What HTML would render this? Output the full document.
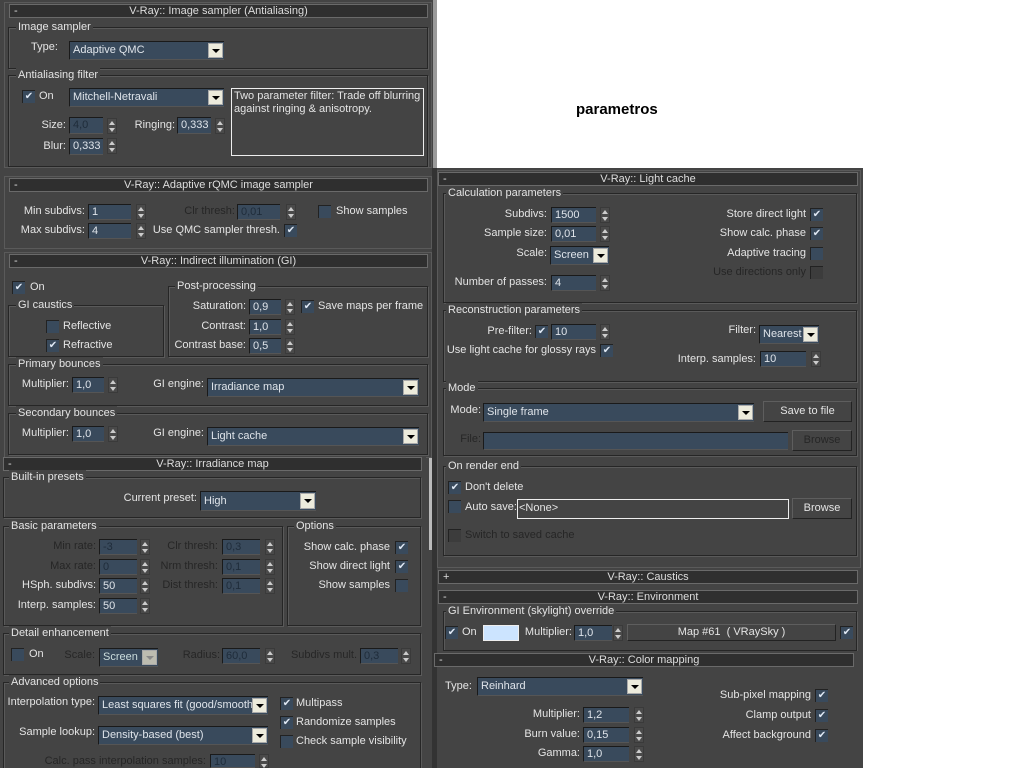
<!DOCTYPE html>
<html style="overflow:hidden;width:1024px;height:768px"><head><meta charset="utf-8"><style>
body{margin:0;width:1024px;height:768px;background:#fff;position:relative;overflow:hidden;font-family:"Liberation Sans",sans-serif}
div,span{position:absolute;box-sizing:border-box}
.bg{background:#444}
.t{white-space:nowrap;font-size:11px;line-height:14px;color:#e4e4e4}
.r{transform:translateX(-100%)}
.d{color:#262626}
.f{background:#394a5c;border-top:1px solid #1a1a1a;border-left:1px solid #1a1a1a;border-bottom:1px solid #555;font-size:11px;line-height:14px;color:#dfe4ea;padding-left:3px;white-space:nowrap;overflow:hidden}
.f.dm{color:#1f2c3a}
.a{right:1px;top:1px;bottom:1px;width:15px;background:#ecebdc;border:1px solid #aaa}
.a:after{content:"";position:absolute;left:3px;top:5px;border-left:4px solid transparent;border-right:4px solid transparent;border-top:4px solid #000}
.a.dm{background:#bdbcb0}.a.dm:after{border-top-color:#888}
.sp{width:10px;height:16px;background:#4a4a4a;border:1px solid #3a3a3a}
.sp:before{content:"";position:absolute;left:1px;top:2px;border-left:3px solid transparent;border-right:3px solid transparent;border-bottom:4px solid #ccc}
.sp:after{content:"";position:absolute;left:1px;top:9px;border-left:3px solid transparent;border-right:3px solid transparent;border-top:4px solid #ccc}
.cb{width:13px;height:13px;background:#394a5c;border-top:1px solid #222;border-left:1px solid #222;color:#dfe8f4;font-size:10px;line-height:12px;text-align:center}
.cb.dm{background:#3c3c3c}
.g{border:1px solid #262626;box-shadow:1px 1px 0 #5a5a5a,inset 1px 1px 0 #5a5a5a}
.gl{background:#444;padding:0 2px;font-size:11px;line-height:14px;color:#e4e4e4;white-space:nowrap}
.h{height:14px;background:#2f2f2f;border:1px solid #6a6a6a;color:#ddd;font-size:11px;line-height:12px;text-align:center;white-space:nowrap}
.h i{position:absolute;left:4px;top:0;font-style:normal}
.fr{border:1px solid #5a5a5a}
.b{border:1px solid #5e5e5e;border-right-color:#222;border-bottom-color:#222;background:#444;color:#e4e4e4;font-size:11px;line-height:18px;text-align:center}
</style></head><body>

<div class="bg" style="left:0;top:0;width:437px;height:768px"></div>
<div style="left:433px;top:0;width:4px;height:168px;background:#9a9a9a"></div>
<div style="left:429px;top:458px;width:4px;height:92px;background:#bbb"></div>
<div class="bg" style="left:432px;top:168px;width:431px;height:600px"></div>
<div style="left:432px;top:168px;width:5px;height:600px;background:#333"></div>

<div class="t" style="left:576px;top:101px;font-size:15px;line-height:18px;font-weight:bold;color:#000">parametros</div>

<!-- Panel 1 -->
<div class="fr" style="left:4px;top:2px;width:428px;height:166px"></div>
<div class="h" style="left:9px;top:4px;width:419px"><i>-</i>V-Ray:: Image sampler (Antialiasing)</div>
<div class="g" style="left:8px;top:27px;width:420px;height:42px"></div>
<div class="gl" style="left:16px;top:20px">Image sampler</div>
<div class="t" style="left:31px;top:40px">Type:</div>
<div class="f" style="left:69px;top:41px;width:155px;height:19px;line-height:17px">Adaptive QMC<span class="a"></span></div>
<div class="g" style="left:8px;top:75px;width:420px;height:92px"></div>
<div class="gl" style="left:16px;top:68px">Antialiasing filter</div>
<div class="cb" style="left:22px;top:90px">✔</div>
<div class="t" style="left:39px;top:89px">On</div>
<div class="f" style="left:69px;top:88px;width:155px;height:19px;line-height:17px">Mitchell-Netravali<span class="a"></span></div>
<div style="left:231px;top:88px;width:193px;height:68px;border:1px solid #eee;background:#444;color:#e4e4e4;font-size:11px;line-height:13px;padding:1px 2px">Two parameter filter: Trade off blurring against ringing &amp; anisotropy.</div>
<div class="t r" style="left:66px;top:118px">Size:</div>
<div class="f dm" style="left:69px;top:117px;width:34px;height:17px">4,0</div>
<div class="sp" style="left:107px;top:118px"></div>
<div class="t r" style="left:175px;top:118px">Ringing:</div>
<div class="f" style="left:177px;top:117px;width:34px;height:17px">0,333</div>
<div class="sp" style="left:215px;top:118px"></div>
<div class="t r" style="left:66px;top:139px">Blur:</div>
<div class="f" style="left:69px;top:138px;width:34px;height:17px">0,333</div>
<div class="sp" style="left:107px;top:138px"></div>

<!-- Panel 2 -->
<div class="fr" style="left:4px;top:176px;width:428px;height:73px"></div>
<div class="h" style="left:9px;top:178px;width:419px"><i>-</i>V-Ray:: Adaptive rQMC image sampler</div>
<div class="t r" style="left:85px;top:204px">Min subdivs:</div>
<div class="f" style="left:88px;top:204px;width:43px;height:16px">1</div>
<div class="sp" style="left:136px;top:204px"></div>
<div class="t r d" style="left:235px;top:204px">Clr thresh:</div>
<div class="f dm" style="left:237px;top:204px;width:43px;height:16px">0,01</div>
<div class="sp" style="left:286px;top:204px"></div>
<div class="cb" style="left:318px;top:205px"></div>
<div class="t" style="left:336px;top:204px">Show samples</div>
<div class="t r" style="left:85px;top:223px">Max subdivs:</div>
<div class="f" style="left:88px;top:223px;width:43px;height:16px">4</div>
<div class="sp" style="left:136px;top:223px"></div>
<div class="t r" style="left:280px;top:223px">Use QMC sampler thresh.</div>
<div class="cb" style="left:284px;top:224px">✔</div>

<!-- Panel 3 GI -->
<div class="fr" style="left:4px;top:252px;width:428px;height:206px"></div>
<div class="h" style="left:9px;top:254px;width:419px"><i>-</i>V-Ray:: Indirect illumination (GI)</div>
<div class="cb" style="left:12px;top:281px">✔</div>
<div class="t" style="left:30px;top:280px">On</div>
<div class="g" style="left:8px;top:305px;width:156px;height:52px"></div>
<div class="gl" style="left:16px;top:298px">GI caustics</div>
<div class="cb" style="left:46px;top:320px"></div>
<div class="t" style="left:63px;top:319px">Reflective</div>
<div class="cb" style="left:46px;top:339px">✔</div>
<div class="t" style="left:63px;top:338px">Refractive</div>
<div class="g" style="left:168px;top:286px;width:260px;height:71px"></div>
<div class="gl" style="left:175px;top:279px">Post-processing</div>
<div class="t r" style="left:246px;top:299px">Saturation:</div>
<div class="f" style="left:249px;top:299px;width:32px;height:16px">0,9</div>
<div class="sp" style="left:285px;top:299px"></div>
<div class="cb" style="left:301px;top:300px">✔</div>
<div class="t" style="left:318px;top:299px">Save maps per frame</div>
<div class="t r" style="left:246px;top:319px">Contrast:</div>
<div class="f" style="left:249px;top:319px;width:32px;height:16px">1,0</div>
<div class="sp" style="left:285px;top:319px"></div>
<div class="t r" style="left:246px;top:338px">Contrast base:</div>
<div class="f" style="left:249px;top:338px;width:32px;height:16px">0,5</div>
<div class="sp" style="left:285px;top:338px"></div>
<div class="g" style="left:8px;top:364px;width:420px;height:42px"></div>
<div class="gl" style="left:16px;top:357px">Primary bounces</div>
<div class="t r" style="left:69px;top:377px">Multiplier:</div>
<div class="f" style="left:72px;top:377px;width:32px;height:16px">1,0</div>
<div class="sp" style="left:108px;top:377px"></div>
<div class="t r" style="left:204px;top:377px">GI engine:</div>
<div class="f" style="left:207px;top:378px;width:212px;height:19px;line-height:17px">Irradiance map<span class="a"></span></div>
<div class="g" style="left:8px;top:413px;width:420px;height:42px"></div>
<div class="gl" style="left:16px;top:406px">Secondary bounces</div>
<div class="t r" style="left:69px;top:426px">Multiplier:</div>
<div class="f" style="left:72px;top:426px;width:32px;height:16px">1,0</div>
<div class="sp" style="left:108px;top:426px"></div>
<div class="t r" style="left:204px;top:426px">GI engine:</div>
<div class="f" style="left:207px;top:427px;width:212px;height:19px;line-height:17px">Light cache<span class="a"></span></div>

<!-- Panel 4 Irradiance map -->
<div class="bg" style="left:0;top:457px;width:426px;height:311px"></div>
<div class="h" style="left:3px;top:457px;width:419px"><i>-</i>V-Ray:: Irradiance map</div>
<div class="g" style="left:3px;top:477px;width:418px;height:41px"></div>
<div class="gl" style="left:9px;top:470px">Built-in presets</div>
<div class="t r" style="left:197px;top:491px">Current preset:</div>
<div class="f" style="left:200px;top:491px;width:116px;height:20px;line-height:18px">High<span class="a"></span></div>
<div class="g" style="left:3px;top:526px;width:280px;height:100px"></div>
<div class="gl" style="left:9px;top:519px">Basic parameters</div>
<div class="g" style="left:287px;top:526px;width:134px;height:100px"></div>
<div class="gl" style="left:294px;top:519px">Options</div>
<div class="t r d" style="left:96px;top:539px">Min rate:</div>
<div class="f dm" style="left:99px;top:539px;width:38px;height:16px">-3</div>
<div class="sp" style="left:140px;top:539px"></div>
<div class="t r d" style="left:218px;top:539px">Clr thresh:</div>
<div class="f dm" style="left:222px;top:539px;width:38px;height:16px">0,3</div>
<div class="sp" style="left:265px;top:539px"></div>
<div class="t r d" style="left:96px;top:559px">Max rate:</div>
<div class="f dm" style="left:99px;top:559px;width:38px;height:16px">0</div>
<div class="sp" style="left:140px;top:559px"></div>
<div class="t r d" style="left:218px;top:559px">Nrm thresh:</div>
<div class="f dm" style="left:222px;top:559px;width:38px;height:16px">0,1</div>
<div class="sp" style="left:265px;top:559px"></div>
<div class="t r" style="left:96px;top:578px">HSph. subdivs:</div>
<div class="f" style="left:99px;top:578px;width:38px;height:16px">50</div>
<div class="sp" style="left:140px;top:578px"></div>
<div class="t r d" style="left:218px;top:578px">Dist thresh:</div>
<div class="f dm" style="left:222px;top:578px;width:38px;height:16px">0,1</div>
<div class="sp" style="left:265px;top:578px"></div>
<div class="t r" style="left:96px;top:598px">Interp. samples:</div>
<div class="f" style="left:99px;top:598px;width:38px;height:16px">50</div>
<div class="sp" style="left:140px;top:598px"></div>
<div class="t r" style="left:390px;top:540px">Show calc. phase</div>
<div class="cb" style="left:395px;top:541px">✔</div>
<div class="t r" style="left:390px;top:559px">Show direct light</div>
<div class="cb" style="left:395px;top:560px">✔</div>
<div class="t r" style="left:390px;top:578px">Show samples</div>
<div class="cb" style="left:395px;top:579px"></div>
<div class="g" style="left:3px;top:633px;width:418px;height:42px"></div>
<div class="gl" style="left:9px;top:626px">Detail enhancement</div>
<div class="cb" style="left:11px;top:648px"></div>
<div class="t" style="left:29px;top:647px">On</div>
<div class="t r d" style="left:95px;top:648px">Scale:</div>
<div class="f" style="left:99px;top:648px;width:59px;height:19px;line-height:17px;color:#cdd">Screen<span class="a dm"></span></div>
<div class="t r d" style="left:220px;top:648px">Radius:</div>
<div class="f dm" style="left:222px;top:648px;width:38px;height:16px">60,0</div>
<div class="sp" style="left:265px;top:648px"></div>
<div class="t r d" style="left:357px;top:648px">Subdivs mult.</div>
<div class="f dm" style="left:360px;top:648px;width:38px;height:16px">0,3</div>
<div class="sp" style="left:401px;top:648px"></div>
<div class="g" style="left:3px;top:682px;width:418px;height:90px"></div>
<div class="gl" style="left:9px;top:675px">Advanced options</div>
<div class="t r" style="left:95px;top:695px">Interpolation type:</div>
<div class="f" style="left:98px;top:696px;width:170px;height:19px;line-height:17px">Least squares fit (good/smooth<span class="a"></span></div>
<div class="cb" style="left:280px;top:697px">✔</div>
<div class="t" style="left:296px;top:696px">Multipass</div>
<div class="cb" style="left:280px;top:716px">✔</div>
<div class="t" style="left:296px;top:715px">Randomize samples</div>
<div class="cb" style="left:280px;top:735px"></div>
<div class="t" style="left:296px;top:734px">Check sample visibility</div>
<div class="t r" style="left:95px;top:725px">Sample lookup:</div>
<div class="f" style="left:98px;top:726px;width:170px;height:19px;line-height:17px">Density-based (best)<span class="a"></span></div>
<div class="t r d" style="left:206px;top:754px">Calc. pass interpolation samples:</div>
<div class="f dm" style="left:210px;top:754px;width:45px;height:14px">10</div>
<div class="sp" style="left:259px;top:754px;height:14px"></div>

<!-- Right: Light cache -->
<div class="fr" style="left:437px;top:170px;width:424px;height:398px"></div>
<div class="h" style="left:438px;top:172px;width:420px"><i>-</i>V-Ray:: Light cache</div>
<div class="g" style="left:443px;top:193px;width:414px;height:110px"></div>
<div class="gl" style="left:446px;top:186px">Calculation parameters</div>
<div class="t r" style="left:547px;top:207px">Subdivs:</div>
<div class="f" style="left:551px;top:207px;width:45px;height:16px">1500</div>
<div class="sp" style="left:600px;top:207px"></div>
<div class="t r" style="left:547px;top:226px">Sample size:</div>
<div class="f" style="left:551px;top:226px;width:45px;height:16px">0,01</div>
<div class="sp" style="left:600px;top:226px"></div>
<div class="t r" style="left:547px;top:246px">Scale:</div>
<div class="f" style="left:550px;top:246px;width:59px;height:19px;line-height:17px">Screen<span class="a"></span></div>
<div class="t r" style="left:547px;top:275px">Number of passes:</div>
<div class="f" style="left:551px;top:275px;width:45px;height:16px">4</div>
<div class="sp" style="left:600px;top:275px"></div>
<div class="t r" style="left:806px;top:207px">Store direct light</div>
<div class="cb" style="left:810px;top:208px">✔</div>
<div class="t r" style="left:806px;top:226px">Show calc. phase</div>
<div class="cb" style="left:810px;top:227px">✔</div>
<div class="t r" style="left:806px;top:246px">Adaptive tracing</div>
<div class="cb" style="left:810px;top:247px"></div>
<div class="t r d" style="left:806px;top:265px">Use directions only</div>
<div class="cb dm" style="left:810px;top:266px"></div>
<div class="g" style="left:443px;top:310px;width:414px;height:72px"></div>
<div class="gl" style="left:446px;top:303px">Reconstruction parameters</div>
<div class="t r" style="left:532px;top:324px">Pre-filter:</div>
<div class="cb" style="left:535px;top:325px">✔</div>
<div class="f" style="left:551px;top:324px;width:45px;height:16px">10</div>
<div class="sp" style="left:600px;top:324px"></div>
<div class="t r" style="left:596px;top:343px">Use light cache for glossy rays</div>
<div class="cb" style="left:600px;top:344px">✔</div>
<div class="t r" style="left:756px;top:323px">Filter:</div>
<div class="f" style="left:759px;top:325px;width:60px;height:19px;line-height:17px">Nearest<span class="a"></span></div>
<div class="t r" style="left:756px;top:352px">Interp. samples:</div>
<div class="f" style="left:760px;top:351px;width:46px;height:16px">10</div>
<div class="sp" style="left:811px;top:351px"></div>
<div class="g" style="left:443px;top:388px;width:414px;height:68px"></div>
<div class="gl" style="left:446px;top:381px">Mode</div>
<div class="t r" style="left:481px;top:403px">Mode:</div>
<div class="f" style="left:483px;top:403px;width:271px;height:19px;line-height:17px">Single frame<span class="a"></span></div>
<div class="b" style="left:763px;top:401px;width:89px;height:21px">Save to file</div>
<div class="t r d" style="left:481px;top:432px">File:</div>
<div class="f" style="left:483px;top:432px;width:305px;height:18px"></div>
<div class="b" style="left:792px;top:430px;width:60px;height:21px;color:#262626">Browse</div>
<div class="g" style="left:443px;top:466px;width:414px;height:90px"></div>
<div class="gl" style="left:446px;top:459px">On render end</div>
<div class="cb" style="left:448px;top:481px">✔</div>
<div class="t" style="left:465px;top:480px">Don't delete</div>
<div class="cb" style="left:448px;top:500px"></div>
<div class="t" style="left:465px;top:500px">Auto save:</div>
<div style="left:517px;top:499px;width:272px;height:20px;border:1px solid #eee;color:#e4e4e4;font-size:11px;line-height:17px;padding-left:1px">&lt;None&gt;</div>
<div class="b" style="left:792px;top:498px;width:60px;height:21px">Browse</div>
<div class="cb dm" style="left:448px;top:529px"></div>
<div class="t d" style="left:465px;top:528px">Switch to saved cache</div>

<div class="h" style="left:438px;top:570px;width:420px"><i>+</i>V-Ray:: Caustics</div>
<div class="h" style="left:438px;top:590px;width:420px"><i>-</i>V-Ray:: Environment</div>
<div class="g" style="left:443px;top:611px;width:414px;height:40px"></div>
<div class="gl" style="left:446px;top:604px">GI Environment (skylight) override</div>
<div class="cb" style="left:445px;top:626px">✔</div>
<div class="t" style="left:462px;top:625px">On</div>
<div style="left:483px;top:625px;width:36px;height:16px;background:#cce4ff;border:1px solid #eee"></div>
<div class="t r" style="left:572px;top:625px">Multiplier:</div>
<div class="f" style="left:574px;top:625px;width:38px;height:16px">1,0</div>
<div class="sp" style="left:613px;top:625px"></div>
<div class="b" style="left:627px;top:624px;width:209px;height:17px;line-height:15px">Map #61&nbsp; ( VRaySky )</div>
<div class="cb" style="left:840px;top:626px">✔</div>

<!-- Color mapping -->
<div class="bg" style="left:432px;top:651px;width:431px;height:117px"></div>
<div style="left:432px;top:651px;width:5px;height:117px;background:#333"></div>
<div class="h" style="left:434px;top:653px;width:420px"><i>-</i>V-Ray:: Color mapping</div>
<div class="t" style="left:445px;top:679px">Type:</div>
<div class="f" style="left:477px;top:677px;width:166px;height:19px;line-height:17px">Reinhard<span class="a"></span></div>
<div class="t r" style="left:580px;top:707px">Multiplier:</div>
<div class="f" style="left:583px;top:707px;width:46px;height:16px">1,2</div>
<div class="sp" style="left:634px;top:707px"></div>
<div class="t r" style="left:580px;top:727px">Burn value:</div>
<div class="f" style="left:583px;top:727px;width:46px;height:16px">0,15</div>
<div class="sp" style="left:634px;top:727px"></div>
<div class="t r" style="left:580px;top:746px">Gamma:</div>
<div class="f" style="left:583px;top:746px;width:46px;height:16px">1,0</div>
<div class="sp" style="left:634px;top:746px"></div>
<div class="t r" style="left:811px;top:688px">Sub-pixel mapping</div>
<div class="cb" style="left:815px;top:689px">✔</div>
<div class="t r" style="left:811px;top:708px">Clamp output</div>
<div class="cb" style="left:815px;top:709px">✔</div>
<div class="t r" style="left:811px;top:728px">Affect background</div>
<div class="cb" style="left:815px;top:729px">✔</div>

</body></html>
